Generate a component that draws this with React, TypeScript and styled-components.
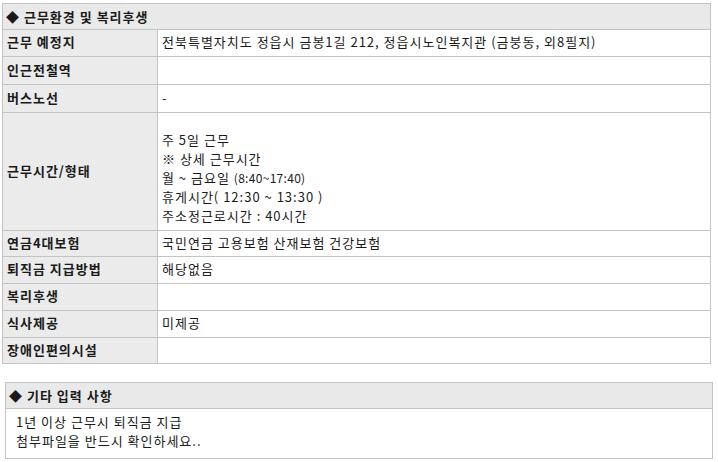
import React from "react";
import styled, { createGlobalStyle } from "styled-components";

const Global = createGlobalStyle`
  html, body { margin: 0; padding: 0; background: #ffffff; }
  body {
    font-family: "Noto Sans CJK KR", "Noto Sans", "Liberation Sans", sans-serif;
    font-size: 13px;
    letter-spacing: 1px;
    color: #1a1a1a;
  }
`;

const Page = styled.div`
  display: flex;
  flex-direction: column;
  padding-top: 3px;
  gap: 18px;
`;

const Box = styled.div<{ $left: number; $width: number }>`
  box-sizing: border-box;
  margin-left: ${(p) => p.$left}px;
  width: ${(p) => p.$width}px;
  border: 1px solid #c3c3c3;
`;

const Title = styled.div`
  height: 26px;
  display: flex;
  align-items: center;
  padding-left: 3px;
  padding-bottom: 1px;
  box-sizing: border-box;
  background: #e9e9e9;
  border-bottom: 1px solid #c3c3c3;
  font-weight: 700;
  line-height: 19px;
`;

const Row = styled.div<{ $h: number }>`
  display: grid;
  grid-template-columns: 155px 1fr;
  min-height: ${(p) => p.$h}px;
  border-bottom: 1px solid #c3c3c3;
  &:last-child { border-bottom: none; }
`;

const Label = styled.div`
  display: flex;
  align-items: center;
  padding: 0 4px 3px 4px;
  background: #ebebeb;
  border-right: 1px solid #c3c3c3;
  font-weight: 700;
  line-height: 19px;
`;

const Value = styled.div<{ $padTop?: number; $padBottom?: number }>`
  display: flex;
  flex-direction: column;
  justify-content: center;
  padding: ${(p) => p.$padTop ?? 0}px 4px ${(p) => p.$padBottom ?? 3}px 4px;
  line-height: 19px;
`;

const Small = styled.span`
  font-size: 12px;
  letter-spacing: 0.3px;
`;

const Note = styled.div`
  padding: 3px 10px 8px 10px;
  line-height: 19px;
`;

const rows: { label: string; value: React.ReactNode; h: number; padTop?: number; padBottom?: number }[] = [
  { label: "근무 예정지", value: "전북특별자치도 정읍시 금봉1길 212, 정읍시노인복지관 (금붕동, 외8필지)", h: 26 },
  { label: "인근전철역", value: "", h: 27 },
  { label: "버스노선", value: "-", h: 27 },
  {
    label: "근무시간/형태",
    value: (
      <>
        <div>주 5일 근무</div>
        <div>※ 상세 근무시간</div>
        <div>
          월 ~ 금요일 <Small>(8:40~17:40)</Small>
        </div>
        <div>휴게시간( 12:30 ~ 13:30 )</div>
        <div>주소정근로시간 : 40시간</div>
      </>
    ),
    h: 117,
    padTop: 12,
    padBottom: 0,
  },
  { label: "연금4대보험", value: "국민연금 고용보험 산재보험 건강보험", h: 25 },
  { label: "퇴직금 지급방법", value: "해당없음", h: 26 },
  { label: "복리후생", value: "", h: 26 },
  { label: "식사제공", value: "미제공", h: 26 },
  { label: "장애인편의시설", value: "", h: 25 },
];

export default function App() {
  return (
    <>
      <Global />
      <Page>
        <Box $left={2} $width={709}>
          <Title>◆ 근무환경 및 복리후생</Title>
          {rows.map((r) => (
            <Row key={r.label} $h={r.h}>
              <Label>{r.label}</Label>
              <Value $padTop={r.padTop} $padBottom={r.padBottom}>
                {r.value}
              </Value>
            </Row>
          ))}
        </Box>
        <Box $left={5} $width={708}>
          <Title>◆ 기타 입력 사항</Title>
          <Note>
            <div>1년 이상 근무시 퇴직금 지급</div>
            <div>첨부파일을 반드시 확인하세요..</div>
          </Note>
        </Box>
      </Page>
    </>
  );
}
